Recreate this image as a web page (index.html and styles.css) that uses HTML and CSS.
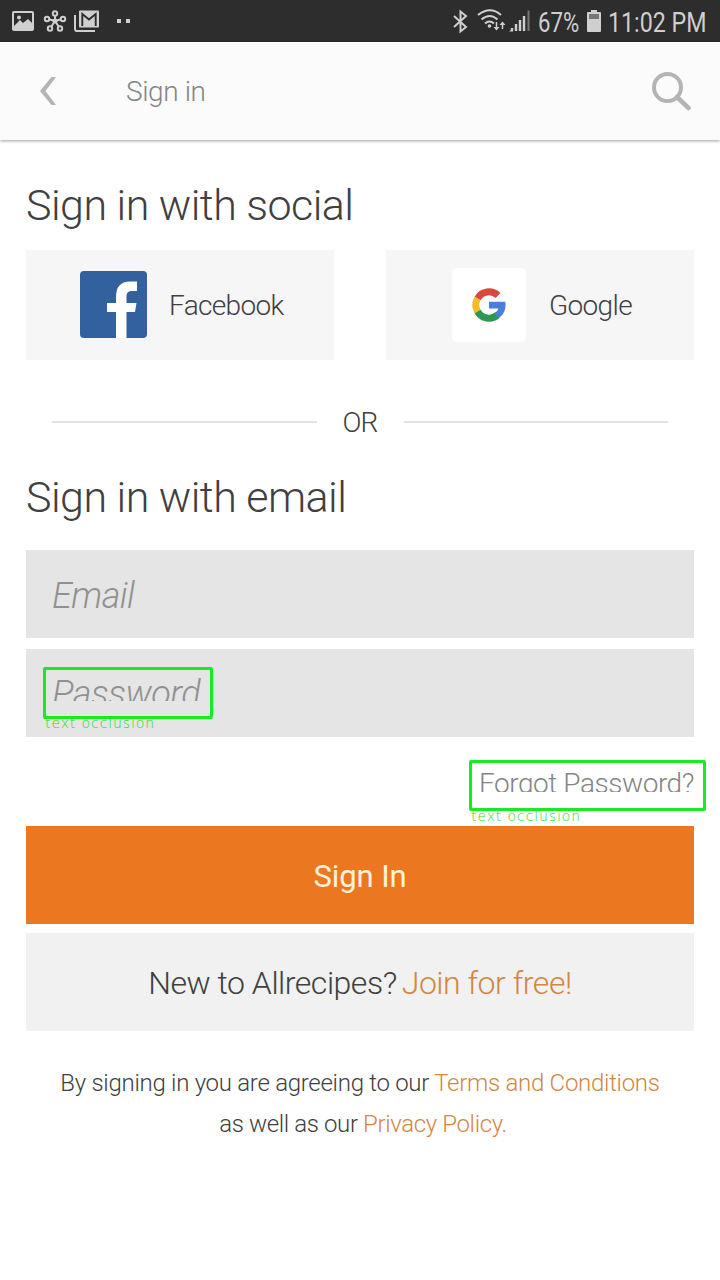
FILE: index.html
```html
<!DOCTYPE html>
<html lang="en">
<head>
<meta charset="utf-8">
<title>Sign in</title>
<link rel="stylesheet" href="styles.css">
</head>
<body>
<div class="status">
  <svg class="status-left" width="140" height="42" viewBox="0 0 140 42" fill="none" stroke="#cfcfcf">
    <rect x="13" y="12" width="20" height="18" rx="1" stroke-width="2"/>
    <path d="M14 26l6-6 3 3 5-4 4 4v6H14z" fill="#cfcfcf" stroke="none"/><circle cx="19" cy="17.500" r="2" fill="#cfcfcf" stroke="none"/>
    <g stroke-width="2"><path d="M55 21V15M55 21l-7-2M55 21l7-2M55 21l-4 6M55 21l4 6"/>
    <g fill="#2d2d2d"><circle cx="55" cy="13.500" r="2.200"/><circle cx="47" cy="19" r="2.200"/><circle cx="63" cy="19" r="2.200"/><circle cx="50" cy="28.500" r="2.200"/><circle cx="60" cy="28.500" r="2.200"/></g></g>
    <circle cx="55" cy="21" r="2.500" fill="#cfcfcf" stroke="none"/>
    <path d="M75 15v14q0 2 2 2h18" stroke-width="2"/>
    <rect x="79" y="10.500" width="20" height="17" rx="1" fill="#cfcfcf" stroke="none"/>
    <path d="M82.300 26V14l6.700 5.500 6.700-5.500V26" stroke="#2d2d2d" stroke-width="1.900"/>
    <path d="M117 19h4v4h-4zM126 19h4v4h-4z" fill="#cfcfcf" stroke="none"/>
  </svg>
  <div class="status-right">
    <svg width="80" height="42" viewBox="450 0 80 42" fill="none" stroke="#cfcfcf" stroke-width="2">
      <path d="M454 16l12 11-5.500 4.500v-20l5.500 4.500-12 11"/>
      <path d="M478 15q12-9.500 23 0M481.500 19.500q8.500-7 16 0M485 23.500q4.500-4 9 0"/><circle cx="489.500" cy="26" r="1.800" fill="#cfcfcf" stroke="none"/>
      <path d="M496.500 22v7M502.500 29v-6" stroke-width="1.500"/><path d="M493.500 27h6l-3 3.500zM499.500 25h6l-3-3.500z" fill="#cfcfcf" stroke="none"/>
      <path d="M512 31v-3M516 31v-7M520 31v-11M524 31v-15" stroke-width="2.400"/><path d="M528.500 31V10.500" stroke="#777"/>
      <path d="M509 31.500l4-3v3z" fill="#cfcfcf" stroke="none"/>
    </svg>
    <span class="percent">67%</span>
    <svg class="battery" width="14" height="22" viewBox="0 0 14 22"><path d="M4 0h6v2h3q1 0 1 1v18q0 1-1 1H1q-1 0-1-1V3q0-1 1-1h3z" fill="#cfcfcf"/><path d="M2 4h10v5H2z" fill="#777"/></svg>
    <span class="clock">11:02 PM</span>
  </div>
</div>
<header class="bar">
  <svg class="back" width="16" height="28" viewBox="0 0 16 28"><path d="M11.500 0H16L5.500 14 16 28h-4.500L0 14z" fill="#b4b4b4"/></svg>
  <span class="bar-title">Sign in</span>
  <svg class="search" width="40" height="40" viewBox="0 0 40 40" fill="none" stroke="#b4b4b4"><circle cx="16.500" cy="16.500" r="13.500" stroke-width="4"/><path d="M26 26l11.500 11" stroke-width="4.500" stroke-linecap="round"/></svg>
</header>
<main class="content">
  <h1 class="heading social-heading">Sign in with social</h1>
  <div class="socials">
    <button class="social facebook">
      <svg class="facebook-logo" width="67" height="67" viewBox="0 0 67 67"><rect width="67" height="67" rx="4" fill="#33619f"/><path d="M36 67V41h-9v-9h9v-6q0-15.500 14-15.500h7V20h-5q-5.500 0-5.500 5v7h10l-1.500 9h-8.500v26z" fill="#fff"/></svg>
      <span class="facebook-name">Facebook</span>
    </button>
    <button class="social google">
      <span class="google-tile"><svg width="34" height="34" viewBox="0 0 34 34" fill="none" stroke-width="7"><path d="M5.600 10.400A13.100 13.100 0 0 1 26 7.500" stroke="#d8493c"/><path d="M5.600 23.500A13.100 13.100 0 0 1 5.600 10.400" stroke="#f1bd2b"/><path d="M25.500 27A13.100 13.100 0 0 1 5.600 23.500" stroke="#309650"/><path d="M17 13.800h16.300q1.500 9.500-5.600 15.800l-5.500-4.200q3.400-2.100 4.300-5H17z" fill="#487fdc" stroke="none"/></svg></span>
      <span class="google-name">Google</span>
    </button>
  </div>
  <div class="divider"><span class="or">OR</span></div>
  <h2 class="heading email-heading">Sign in with email</h2>
  <div class="field"><span class="email-hint">Email</span></div>
  <div class="field password-field">
    <span class="password-hint">Password</span>
    <div class="mark password-mark"><span class="mark-label">text occlusion</span></div>
  </div>
  <div class="forgot">
    <a class="forgot-link">Forgot Password?</a>
    <div class="mark forgot-mark"><span class="mark-label">text occlusion</span></div>
  </div>
  <button class="submit"><span>Sign In</span></button>
  <div class="join"><span class="join-question">New to Allrecipes?</span><a class="join-link">Join for free!</a></div>
  <p class="terms"><span class="terms-first">By signing in you are agreeing to our <a>Terms and Conditions</a></span><br><span class="terms-second">as well as our <a>Privacy Policy.</a></span></p>
</main>
</body>
</html>
```
FILE: styles.css
```css
* { box-sizing: border-box; }
body { margin: 0; width: 720px; height: 1280px; overflow: hidden; background: #fff; color: #404040; font-family: Roboto, "Liberation Sans", sans-serif; font-weight: 300; }
button { border: 0; padding: 0; margin: 0; font: inherit; color: inherit; }
svg { display: block; flex: none; }
span, a { white-space: nowrap; }
.status { height: 42px; background: #2d2d2d; display: flex; justify-content: space-between; color: #cfcfcf; }
.status-right { display: flex; align-items: center; width: 270px; font-size: 27px; font-weight: 400; line-height: 42px; }
.percent { margin-left: 8px; width: 49px; padding-top: 3px; transform: scaleX(.82); transform-origin: left; }
.clock { margin-left: 7px; padding-top: 3px; transform: scaleX(.86); transform-origin: left; }
.bar { height: 98px; display: flex; align-items: center; padding: 0 29px 0 40px; background: #fbfbfb; box-shadow: 0 1px 3px rgba(0,0,0,.38); }
.bar-title { margin-left: 70px; font-size: 28px; color: #858585; letter-spacing: -.4px; }
.search { margin-left: auto; }
.content { padding: 39px 26px 0; }
.heading { margin: 0; height: 52px; line-height: 52px; font-size: 43px; font-weight: 300; letter-spacing: -.52px; white-space: nowrap; }
.socials { margin-top: 19px; display: grid; grid-template-columns: 308px 308px; gap: 52px; height: 110px; }
.social { background: #f6f6f6; display: flex; align-items: center; font-size: 28px; }
.facebook { padding-left: 54px; gap: 22px; }
.facebook-logo { margin-bottom: 1px; }
.google { padding-left: 66px; gap: 23px; }
.google-tile { width: 74px; height: 74px; border-radius: 5px; background: #fff; display: flex; align-items: center; justify-content: center; }
.facebook-name, .google-name { letter-spacing: -.65px; }
.divider { display: flex; align-items: center; gap: 26px; height: 40px; margin: 42px 26px 0; font-size: 28px; }
.divider::before, .divider::after { content: ""; flex: 1; height: 2px; background: #e3e3e3; }
.or { width: 35px; letter-spacing: -1px; }
.email-heading { margin-top: 29px; }
.field { height: 88px; margin-top: 27px; padding-left: 26px; background: #e5e5e5; color: #919191; font-size: 36px; font-style: italic; display: flex; align-items: center; }
.email-hint { padding-top: 4px; letter-spacing: -.6px; }
.password-field { position: relative; margin-top: 11px; align-items: flex-start; padding-top: 20px; }
.password-hint { display: block; height: 32px; line-height: 51px; letter-spacing: -.5px; padding-right: 5px; overflow: hidden; }
.mark { position: absolute; height: 52px; border: 3px solid #16ed20; border-radius: 2px; }
.mark-label { position: absolute; left: -1px; top: 45px; height: 16px; line-height: 16px; font-family: "DejaVu Sans", sans-serif; font-weight: 200; font-style: normal; font-size: 14px; letter-spacing: .9px; color: #20dc28; }
.password-mark { left: 17px; top: 18px; width: 170px; }
.forgot { position: relative; height: 89px; padding-top: 23px; text-align: right; color: #858585; font-size: 28px; }
.forgot-link { display: inline-block; height: 32px; line-height: 47px; letter-spacing: -.45px; overflow: hidden; }
.forgot-mark { left: 443px; top: 23px; width: 237px; height: 51px; }
.submit { display: flex; align-items: center; justify-content: center; width: 668px; height: 98px; background: #eb7820; color: #fff2d8; font-size: 31px; font-weight: 400; letter-spacing: -.1px; padding-top: 3px; }
.join { margin-top: 9px; height: 98px; background: #f1f1f1; display: flex; align-items: center; justify-content: center; gap: 5px; font-size: 32px; letter-spacing: -.48px; padding-top: 2px; }
.join-link, .terms a { color: #d3863f; }
.terms { margin: 32px 0 0; text-align: center; font-size: 24px; line-height: 41px; letter-spacing: -.28px; }
.terms-second { letter-spacing: -.37px; position: relative; left: 3px; }
```
